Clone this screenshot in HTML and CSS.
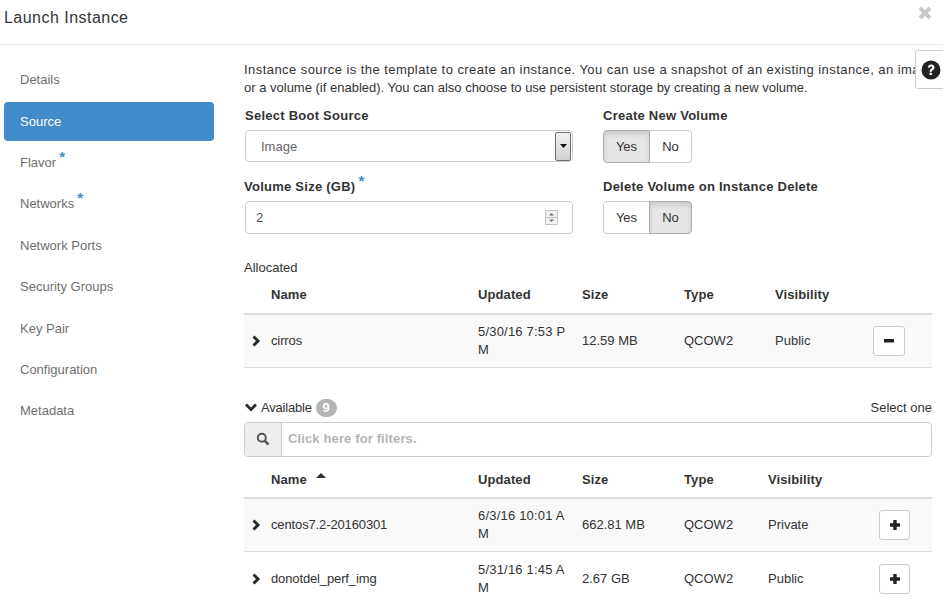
FILE: index.html
```html
<!DOCTYPE html>
<html lang="en">
<head>
<meta charset="utf-8">
<title>Launch Instance</title>
<link rel="stylesheet" href="styles.css">
</head>
<body>
<div class="modal">
  <header class="modal-header">
    <h1 class="modal-title">Launch Instance</h1>
    <svg class="close-icon" width="14" height="14" viewBox="0 0 14 14" aria-hidden="true"><path d="M2 2 12 12M12 2 2 12" fill="none" stroke="#c9c9c9" stroke-width="4"/></svg>
  </header>
  <div class="modal-body">
    <nav class="steps">
      <a class="step">Details</a>
      <a class="step active">Source</a>
      <a class="step">Flavor<span class="req">*</span></a>
      <a class="step">Networks<span class="req">*</span></a>
      <a class="step">Network Ports</a>
      <a class="step">Security Groups</a>
      <a class="step">Key Pair</a>
      <a class="step">Configuration</a>
      <a class="step">Metadata</a>
    </nav>
    <main class="content">
      <p class="intro"><span class="intro-wide">Instance source is the template to create an instance. You can use a snapshot of an existing instance, an image</span><br>or a volume (if enabled). You can also choose to use persistent storage by creating a new volume.</p>
      <div class="form-grid">
        <div class="field">
          <label class="label">Select Boot Source</label>
          <div class="select"><span class="select-value">Image</span>
            <span class="select-arrow"><svg width="7" height="4" viewBox="0 0 7 4"><path d="M0 0h7L3.5 4z" fill="#111"/></svg></span>
          </div>
        </div>
        <div class="field">
          <label class="label">Create New Volume</label>
          <div class="toggle"><span class="toggle-btn on">Yes</span><span class="toggle-btn">No</span></div>
        </div>
        <div class="field">
          <label class="label label-vol">Volume Size (GB)<span class="req">*</span></label>
          <div class="number"><span>2</span>
            <span class="spinner">
              <svg width="13" height="15" viewBox="0 0 13 15"><path d="M.5.5h12v14H.5z" fill="#f1f1f1" stroke="#c4c4c4"/><path d="M1 7.5h11" stroke="#c4c4c4"/><path d="M4 5.500h5L6.500 3z" fill="#6d6d8a"/><path d="M4 9.500h5L6.500 12z" fill="#6d6d8a"/></svg>
            </span>
          </div>
        </div>
        <div class="field">
          <label class="label">Delete Volume on Instance Delete</label>
          <div class="toggle"><span class="toggle-btn">Yes</span><span class="toggle-btn on">No</span></div>
        </div>
      </div>

      <div class="section-title allocated">Allocated</div>
      <table class="grid grid-allocated">
        <colgroup><col class="c-exp"><col class="c-name"><col class="c-upd"><col class="c-size"><col class="c-type-a"><col class="c-vis-a"><col></colgroup>
        <thead><tr><th></th><th>Name</th><th>Updated</th><th>Size</th><th>Type</th><th>Visibility</th><th></th></tr></thead>
        <tbody>
          <tr class="shaded">
            <td class="exp"><svg class="chev" width="10" height="12" viewBox="0 0 10 12"><path d="M2.500 1.500 7 6l-4.500 4.500" fill="none" stroke="#2b2b2b" stroke-width="3"/></svg></td>
            <td class="name">cirros</td><td class="upd">5/30/16 7:53 PM</td><td>12.59 MB</td><td>QCOW2</td><td>Public</td>
            <td><span class="row-btn btn-minus"><svg width="12" height="4" viewBox="0 0 12 4"><path d="M1 0h10v3.500H1z" fill="#222"/></svg></span></td>
          </tr>
        </tbody>
      </table>

      <div class="available-row">
        <span class="avail-left"><svg width="14" height="9" viewBox="0 0 14 9"><path d="M2 1.500l5 5 5-5" fill="none" stroke="#2b2b2b" stroke-width="2.800"/></svg><span class="avail-text">Available</span><span class="badge">9</span></span>
        <span>Select one</span>
      </div>
      <div class="filter">
        <span class="filter-addon"><svg width="14" height="14" viewBox="0 0 14 14"><circle cx="5.800" cy="5.800" r="4" fill="none" stroke="#555" stroke-width="2"/><path d="M8.800 8.800 12.500 12.500" stroke="#555" stroke-width="2.600"/></svg></span>
        <span class="filter-input">Click here for filters.</span>
      </div>
      <table class="grid grid-available">
        <colgroup><col class="c-exp"><col class="c-name"><col class="c-upd"><col class="c-size"><col class="c-type-b"><col class="c-vis-b"><col></colgroup>
        <thead><tr><th></th><th>Name<svg class="sort" width="10" height="5" viewBox="0 0 10 5"><path d="M0 5 5 0l5 5z" fill="#333"/></svg></th><th>Updated</th><th>Size</th><th>Type</th><th>Visibility</th><th></th></tr></thead>
        <tbody>
          <tr class="shaded">
            <td class="exp"><svg class="chev" width="10" height="12" viewBox="0 0 10 12"><path d="M2.500 1.500 7 6l-4.500 4.500" fill="none" stroke="#2b2b2b" stroke-width="3"/></svg></td>
            <td class="name">centos7.2-20160301</td><td class="upd">6/3/16 10:01 AM</td><td>662.81 MB</td><td>QCOW2</td><td>Private</td>
            <td><span class="row-btn"><svg width="12" height="12" viewBox="0 0 12 12"><path d="M4.300 1h3.400v3.300H11v3.400H7.700V11H4.300V7.700H1V4.300h3.300z" fill="#222"/></svg></span></td>
          </tr>
          <tr>
            <td class="exp"><svg class="chev" width="10" height="12" viewBox="0 0 10 12"><path d="M2.500 1.500 7 6l-4.500 4.500" fill="none" stroke="#2b2b2b" stroke-width="3"/></svg></td>
            <td class="name">donotdel_perf_img</td><td class="upd">5/31/16 1:45 AM</td><td>2.67 GB</td><td>QCOW2</td><td>Public</td>
            <td><span class="row-btn"><svg width="12" height="12" viewBox="0 0 12 12"><path d="M4.300 1h3.400v3.300H11v3.400H7.700V11H4.300V7.700H1V4.300h3.300z" fill="#222"/></svg></span></td>
          </tr>
        </tbody>
      </table>
    </main>
    <div class="help-tab"><svg width="20" height="20" viewBox="0 0 20 20"><circle cx="10" cy="10" r="9.500" fill="#222"/><path d="M6.800 7.600C7 5.600 8.400 4.600 10.200 4.600c1.900 0 3.300 1.200 3.300 2.900 0 2.600-2.700 2.500-2.700 4.200H8.600c0-2.900 2.500-2.800 2.500-4.100 0-.7-.4-1.100-1-1.100-.7 0-1.100.5-1.200 1.300z" fill="#fff"/><path d="M8.600 12.700h2.300v2.300H8.600z" fill="#fff"/></svg></div>
  </div>
</div>
</body>
</html>
```
FILE: styles.css
```css
* { box-sizing: border-box; }
html, body { margin: 0; padding: 0; }
body {
  width: 943px;
  height: 602px;
  overflow: hidden;
  background: #fff;
  color: #333;
  font-family: "Liberation Sans", Arial, sans-serif;
  font-size: 13px;
  line-height: 18px;
}
.modal-header {
  height: 45px;
  border-bottom: 1px solid #e5e5e5;
  display: flex;
  justify-content: space-between;
  padding: 6px 11px 0 4px;
}
.modal-title {
  margin: 0;
  font-size: 16px;
  font-weight: 400;
  line-height: 24px;
  letter-spacing: 0.47px;
}
.close-icon { margin-top: 0; }
.modal-body { display: flex; position: relative; height: 557px; overflow: hidden; }
.steps {
  width: 210px;
  margin-left: 4px;
  padding-top: 15.450px;
  flex: none;
  display: flex;
  flex-direction: column;
  gap: 2.350px;
}
.step {
  display: block;
  height: 39px;
  line-height: 39px;
  padding-left: 16px;
  border-radius: 4px;
  color: #6f6f6f;
}
.step.active { background: #428bca; color: #fff; }
.req {
  color: #428bca;
  font-size: 15px;
  font-weight: 700;
  line-height: 1;
  margin-left: 3px;
  position: relative;
  top: -5px;
}
.content { width: 688px; margin-left: 30px; flex: none; padding-top: 16px; }
.intro { margin: 0; width: 688px; }
.intro-wide { letter-spacing: 0.44px; white-space: nowrap; }
.form-grid {
  display: grid;
  grid-template-columns: 328px 1fr;
  column-gap: 30px;
  row-gap: 14px;
  padding: 9px 0 0 1px;
}
.label { display: block; font-weight: 700; padding-top: 1px; margin-bottom: 5px; letter-spacing: 0.25px; }
.label-vol { margin-left: -1px; }
.select, .number {
  display: flex;
  align-items: center;
  justify-content: space-between;
  height: 32px;
  border: 1px solid #ccc;
  border-radius: 4px;
  padding-left: 15px;
  color: #555;
}
.select-value { padding-top: 2px; color: #666; }
.number { height: 33px; padding-left: 10px; }
.select-arrow {
  width: 16px;
  height: 29px;
  margin-right: 1px;
  display: flex;
  align-items: center;
  justify-content: center;
  border: 1px solid #707070;
  border-radius: 2px;
  background: linear-gradient(#f2f2f2, #d0d0d0);
}
.spinner { display: flex; margin-right: 14px; }
.toggle { display: flex; width: 89px; height: 33px; }
.toggle-btn {
  flex: none;
  height: 33px;
  width: 47px;
  line-height: 31px;
  text-align: center;
  border: 1px solid #ccc;
  border-radius: 4px 0 0 4px;
  background: #fff;
}
.toggle-btn + .toggle-btn { width: 43px; margin-left: -1px; border-radius: 0 4px 4px 0; }
.toggle-btn.on { background: #e6e6e6; border-color: #adadad; box-shadow: inset 0 3px 5px rgba(0,0,0,.125); position: relative; }
.section-title.allocated { margin-top: 25px; }
.grid { width: 688px; border-collapse: collapse; table-layout: fixed; }
.c-exp { width: 27px; }
.c-name { width: 207px; }
.c-upd { width: 104px; }
.c-size { width: 102px; }
.c-type-a { width: 91px; }
.c-vis-a { width: 98px; }
.c-type-b { width: 84px; }
.c-vis-b { width: 111px; }
.grid th {
  height: 37px;
  padding: 0 0 1px;
  text-align: left;
  font-weight: 700;
  letter-spacing: 0.1px;
  border-bottom: 2px solid #ddd;
}
.grid td {
  height: 54px;
  padding: 0;
  border-bottom: 1px solid #ddd;
  vertical-align: middle;
}
.grid-allocated td { height: 53px; }
.grid-available th { height: 41px; padding: 7px 0 0; }
.shaded { background: #f9f9f9; }
.exp { padding-left: 7px !important; }
.chev { display: block; }
.name { letter-spacing: -0.13px; }
.upd { padding-right: 10px !important; word-break: break-all; letter-spacing: 0.2px; }
.row-btn {
  display: inline-flex;
  align-items: center;
  justify-content: center;
  vertical-align: middle;
  width: 32px;
  height: 30px;
  border: 1px solid #ccc;
  border-radius: 3px;
  background: #fff;
}
.grid-available .row-btn { width: 31px; }
.available-row {
  display: flex;
  justify-content: space-between;
  margin-top: 31px;
}
.avail-left { display: flex; align-items: center; }
.avail-left svg { margin-right: 3px; }
.avail-text { letter-spacing: -0.2px; }
.badge {
  display: inline-block;
  width: 21px;
  height: 18px;
  line-height: 18px;
  margin-left: 4px;
  text-align: center;
  border-radius: 9px;
  background: #b5b5b5;
  color: #fff;
  font-weight: 700;
}
.filter {
  display: flex;
  height: 35px;
  margin-top: 5px;
  border: 1px solid #ccc;
  border-radius: 4px;
  overflow: hidden;
}
.filter-addon {
  width: 37px;
  flex: none;
  display: flex;
  align-items: center;
  justify-content: center;
  background: #eee;
  border-right: 1px solid #ccc;
}
.filter-input { padding-left: 6px; line-height: 31px; font-weight: 700; letter-spacing: 0.13px; color: #b5b5b5; }
.sort { margin-left: 9px; vertical-align: 6px; }
.help-tab {
  position: absolute;
  top: 5px;
  left: 915px;
  width: 40px;
  height: 39px;
  padding: 9px 0 0 5px;
  background: #fff;
  border: 1px solid #ccc;
  border-radius: 3px;
}
```
